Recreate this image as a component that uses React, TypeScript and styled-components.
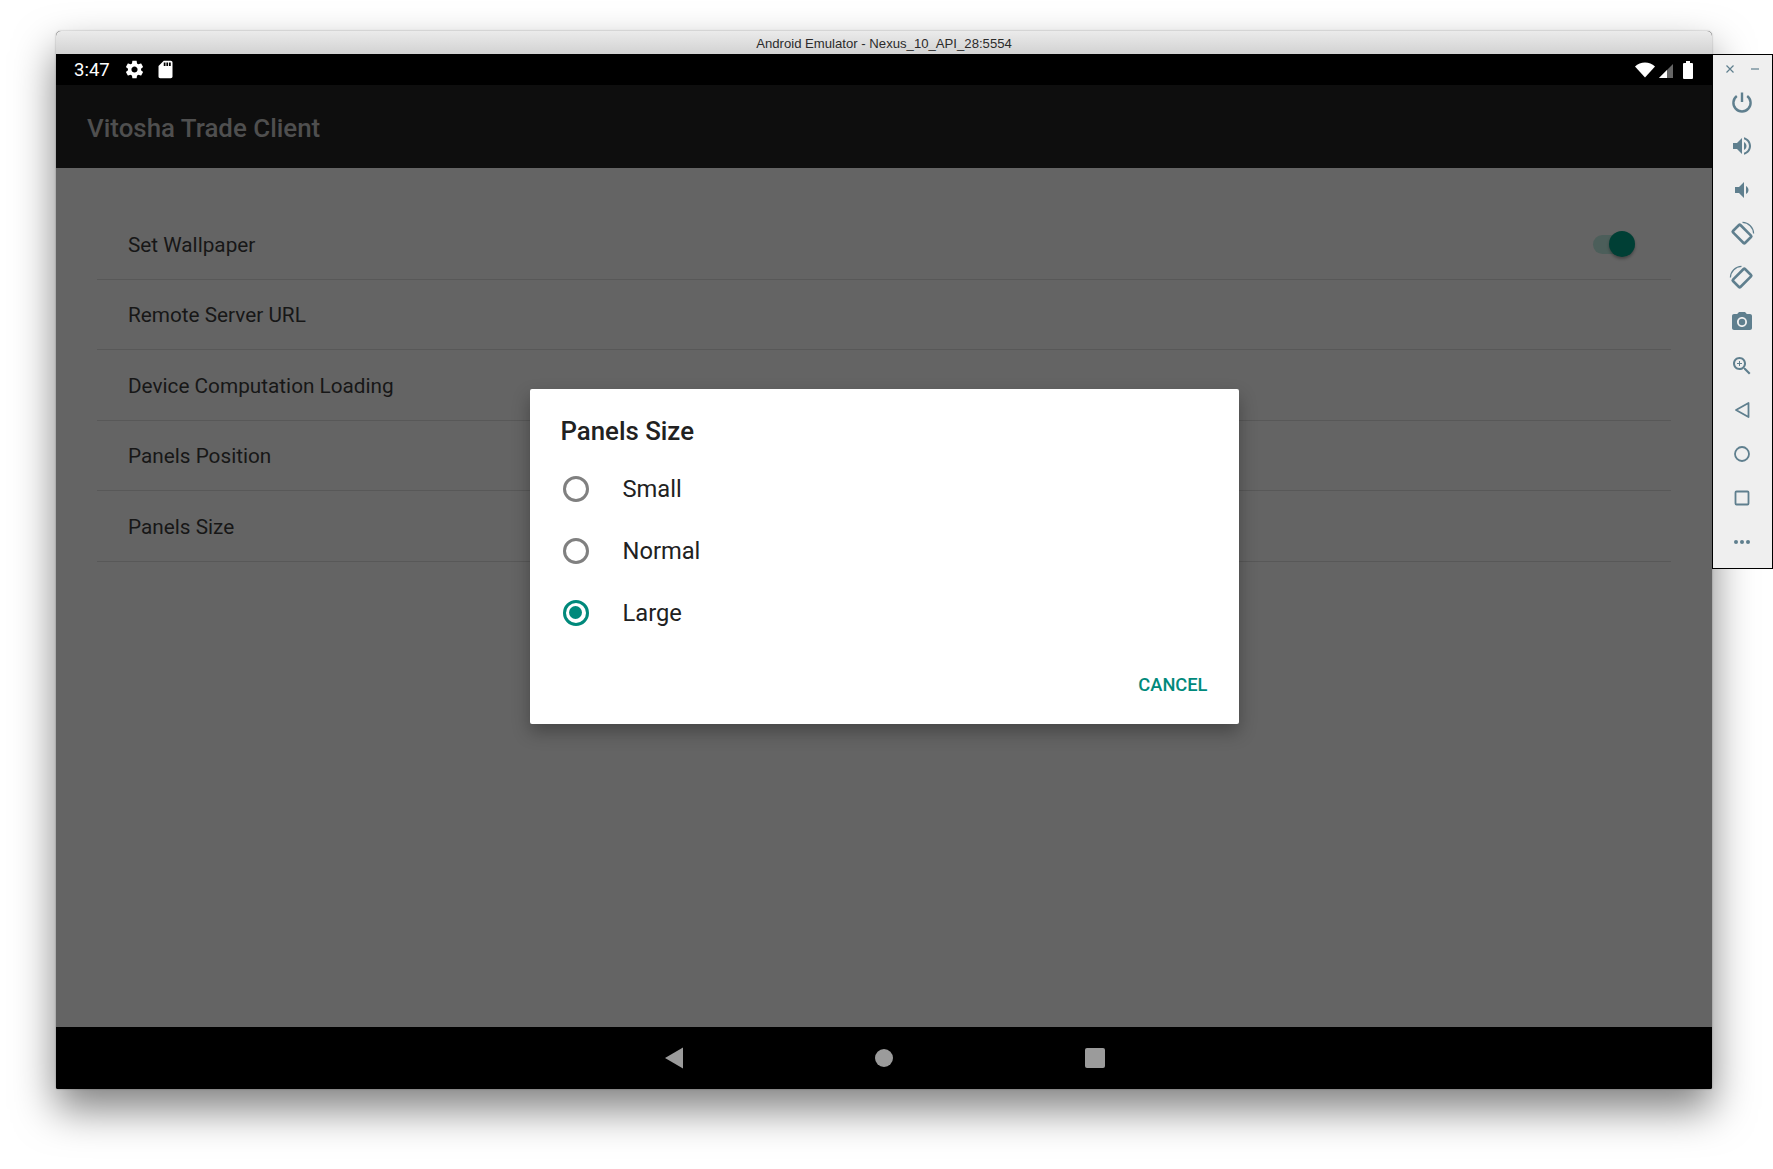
import React from "react";
import styled, { createGlobalStyle } from "styled-components";

const Global = createGlobalStyle`
  html, body { margin: 0; padding: 0; background: #fff; }
  body { width: 1773px; height: 1169px; overflow: hidden; font-family: Roboto, "Liberation Sans", sans-serif; }
`;

const Page = styled.div`
  display: flex;
  align-items: flex-start;
  padding: 31px 0 0 56px;
  width: 1773px;
  height: 1169px;
  box-sizing: border-box;
`;

const Emulator = styled.div`
  width: 1656px;
  height: 1058px;
  flex: none;
  display: flex;
  flex-direction: column;
  border-radius: 5px 5px 2px 2px;
  background: #000;
  box-shadow: 0 20px 42px rgba(0, 0, 0, 0.5), 0 0 2px rgba(0, 0, 0, 0.35);
  overflow: visible;
`;

const TitleBar = styled.div`
  height: 23px;
  flex: none;
  display: flex;
  align-items: center;
  justify-content: center;
  border-radius: 5px 5px 0 0;
  background: linear-gradient(#ebebeb, #d2d2d2);
  font-family: "Liberation Sans", Arial, sans-serif;
  font-size: 13.15px;
  color: #2b2b2b;
  padding-top: 1px;
  box-sizing: border-box;
`;

const StatusBar = styled.div`
  height: 31px;
  flex: none;
  background: #000;
  color: #fff;
  display: flex;
  align-items: center;
  padding: 0 19px 0 18px;
`;

const Clock = styled.span`
  font-size: 18.5px;
  width: 50px;
`;

const StatusRight = styled.div`
  margin-left: auto;
  display: flex;
  align-items: center;
  gap: 4px;
`;

const AppBar = styled.div`
  height: 83px;
  flex: none;
  background: #0e0e0e;
  display: flex;
  align-items: center;
  padding: 2px 0 0 31px;
  box-sizing: border-box;
  font-size: 25.9px;
  font-weight: 500;
  color: #4f4f4f;
`;

const Content = styled.div`
  flex: 1;
  position: relative;
  background: #646464;
  padding: 41px 41px 0 41px;
`;

const Row = styled.div`
  height: 70.5px;
  box-sizing: border-box;
  border-bottom: 1px solid #585858;
  display: flex;
  align-items: center;
  justify-content: space-between;
  padding: 2px 36px 0 31px;
  font-size: 20.75px;
  color: #171717;
`;

const Toggle = styled.div`
  position: relative;
  width: 42px;
  height: 19px;
  margin-top: -1px;
  border-radius: 10px;
  background: #4c5e5a;
`;

const Thumb = styled.div`
  position: absolute;
  right: 0;
  top: -4px;
  width: 26px;
  height: 26px;
  border-radius: 50%;
  background: #003f35;
  box-shadow: 0 2px 3px rgba(0, 0, 0, 0.3);
`;

const Dialog = styled.div`
  position: absolute;
  left: 473.5px;
  top: 220.5px;
  width: 709px;
  height: 335px;
  box-sizing: border-box;
  background: #fff;
  border-radius: 2px;
  box-shadow: 0 8px 18px rgba(0, 0, 0, 0.3);
  padding: 28px 31px 0 31px;
  display: flex;
  flex-direction: column;
`;

const DialogTitle = styled.div`
  font-size: 25.8px;
  font-weight: 500;
  color: #212121;
  line-height: 29px;
  margin-bottom: 12px;
`;

const Option = styled.div`
  height: 62px;
  display: flex;
  align-items: center;
  gap: 34px;
  font-size: 23.7px;
  color: #212121;
  padding-left: 2px;
  line-height: 26px;
`;

const OptionLabel = styled.span`
  padding-top: 1.5px;
`;

const Radio = styled.div<{ $on?: boolean }>`
  width: 26px;
  height: 26px;
  flex: none;
  box-sizing: border-box;
  border-radius: 50%;
  border: 3px solid ${(p) => (p.$on ? "#00897b" : "#808080")};
  display: flex;
  align-items: center;
  justify-content: center;
  &::after {
    content: "";
    display: ${(p) => (p.$on ? "block" : "none")};
    width: 13px;
    height: 13px;
    border-radius: 50%;
    background: #00897b;
  }
`;

const DialogActions = styled.div`
  margin-top: auto;
  height: 66px;
  display: flex;
  justify-content: flex-end;
  align-items: flex-start;
  padding-top: 16px;
  box-sizing: border-box;
`;

const CancelButton = styled.span`
  font-size: 18.3px;
  font-weight: 500;
  color: #00897b;
  line-height: 22px;
`;

const NavBar = styled.div`
  height: 62px;
  flex: none;
  background: #000;
  border-radius: 0 0 2px 2px;
  display: flex;
  align-items: center;
  padding-left: 512.5px;
  color: #9b9b9b;
`;

const NavSlot = styled.div`
  width: 210.5px;
  display: flex;
  justify-content: center;
`;

const NavCircle = styled.div`
  width: 18px;
  height: 18px;
  border-radius: 50%;
  background: #9b9b9b;
`;

const NavSquare = styled.div`
  width: 20px;
  height: 20px;
  border-radius: 2px;
  background: #9b9b9b;
`;

const Sidebar = styled.div`
  width: 61px;
  height: 515px;
  margin-top: 23px;
  flex: none;
  box-sizing: border-box;
  border: 1px solid #000;
  background: #efefef;
  position: relative;
  z-index: 2;
  color: #5f7f8e;
  display: flex;
  flex-direction: column;
  align-items: center;
`;

const WindowControls = styled.div`
  height: 23px;
  margin-top: 2px;
  width: 100%;
  display: flex;
  justify-content: space-between;
  align-items: center;
  padding: 0 12px 0 12px;
  box-sizing: border-box;
`;

const ToolSlot = styled.div`
  height: 44px;
  width: 100%;
  flex: none;
  display: flex;
  align-items: center;
  justify-content: center;
  padding-right: 2px;
  box-sizing: border-box;
`;

const Glyph = styled.svg`
  display: block;
  flex: none;
`;

const StatusGap = styled.span<{ $w: number }>`
  width: ${(p) => p.$w}px;
  flex: none;
`;

const P = {
  gear: "M19.43 12.98c.04-.32.07-.64.07-.98s-.03-.66-.07-.98l2.11-1.65c.19-.15.24-.42.12-.64l-2-3.46c-.12-.22-.39-.3-.61-.22l-2.49 1c-.52-.4-1.08-.73-1.69-.98l-.38-2.65C14.46 2.18 14.25 2 14 2h-4c-.25 0-.46.18-.49.42l-.38 2.65c-.61.25-1.17.59-1.69.98l-2.49-1c-.23-.09-.49 0-.61.22l-2 3.46c-.13.22-.07.49.12.64l2.11 1.65c-.04.32-.07.65-.07.98s.03.66.07.98l-2.11 1.65c-.19.15-.24.42-.12.64l2 3.46c.12.22.39.3.61.22l2.49-1c.52.4 1.08.73 1.69.98l.38 2.65c.03.24.24.42.49.42h4c.25 0 .46-.18.49-.42l.38-2.65c.61-.25 1.17-.59 1.69-.98l2.49 1c.23.09.49 0 .61-.22l2-3.46c.12-.22.07-.49-.12-.64l-2.11-1.65zM12 15.5c-1.93 0-3.5-1.57-3.5-3.5s1.57-3.5 3.5-3.5 3.5 1.57 3.5 3.5-1.57 3.5-3.5 3.5z",
  sd: "M18 2h-8L4.02 8 4 20c0 1.1.9 2 2 2h12c1.1 0 2-.9 2-2V4c0-1.1-.9-2-2-2zm-6 6h-2V4h2v4zm3 0h-2V4h2v4zm3 0h-2V4h2v4z",
  volUp: "M3 9v6h4l5 5V4L7 9H3zm13.5 3c0-1.77-1.02-3.29-2.5-4.03v8.05c1.48-.73 2.5-2.25 2.5-4.02zM14 3.23v2.06c2.89.86 5 3.54 5 6.71s-2.11 5.85-5 6.71v2.06c4.01-.91 7-4.49 7-8.77s-2.99-7.86-7-8.77z",
  volDown: "M18.5 12c0-1.77-1.02-3.29-2.5-4.03v8.05c1.48-.72 2.5-2.24 2.5-4.02zM5 9v6h4l5 5V4L9 9H5z",
  camera: "M9 2L7.17 4H4c-1.1 0-2 .9-2 2v12c0 1.1.9 2 2 2h16c1.1 0 2-.9 2-2V6c0-1.1-.9-2-2-2h-3.17L15 2H9zm3 15c-2.76 0-5-2.24-5-5s2.24-5 5-5 5 2.24 5 5-2.24 5-5 5z",
  zoom: "M15.5 14h-.79l-.28-.27C15.41 12.59 16 11.11 16 9.5 16 5.91 13.09 3 9.5 3S3 5.91 3 9.5 5.91 16 9.5 16c1.61 0 3.09-.59 4.23-1.57l.27.28v.79l5 4.99L20.49 19l-4.99-5zm-6 0C7.01 14 5 11.99 5 9.5S7.01 5 9.5 5 14 7.01 14 9.5 11.99 14 9.5 14z",
  plus: "M12 10h-2v2H9v-2H7V9h2V7h1v2h2v1z",
};

const Solid = ({ d, size = 24 }: { d: string; size?: number }) => (
  <Glyph width={size} height={size} viewBox="0 0 24 24" fill="currentColor">
    <path d={d} />
  </Glyph>
);

const Power = () => (
  <Glyph width={24} height={24} viewBox="0 0 24 24" fill="none" stroke="currentColor" strokeWidth="2.4">
    <path d="M12 2.5v9.5" />
    <path d="M6.8 6a8.6 8.6 0 1 0 10.4 0" />
  </Glyph>
);

const Rotate = ({ left }: { left?: boolean }) => (
  <Glyph width={26} height={26} viewBox="0 0 26 26" fill="none" stroke="currentColor">
    <g transform={left ? "matrix(-1 0 0 1 26 0)" : undefined}>
      <rect x="7.75" y="4.5" width="10.5" height="17" rx="1" strokeWidth="2.6" transform="rotate(-45 13 13)" />
      <path d="M13.5 1.4a11.5 11.5 0 0 1 11.1 11.1" strokeWidth="1.2" />
    </g>
  </Glyph>
);

const Outline = ({ children }: { children: React.ReactNode }) => (
  <Glyph width={24} height={24} viewBox="0 0 24 24" fill="none" stroke="currentColor" strokeWidth="1.8">
    {children}
  </Glyph>
);

const settings = ["Set Wallpaper", "Remote Server URL", "Device Computation Loading", "Panels Position", "Panels Size"];
const sizes = ["Small", "Normal", "Large"];

export default function App() {
  return (
    <Page>
      <Global />
      <Emulator>
        <TitleBar>Android Emulator - Nexus_10_API_28:5554</TitleBar>
        <StatusBar>
          <Clock>3:47</Clock>
          <Solid d={P.gear} size={21} />
          <StatusGap $w={10} />
          <Solid d={P.sd} size={21} />
          <StatusRight>
            <Glyph width={20} height={16} viewBox="0 0 20 16">
              <path d="M0 4.5C2.8 2 6.2.5 10 .5s7.2 1.5 10 4L10 15.5z" fill="#fff" />
            </Glyph>
            <Glyph width={14} height={16} viewBox="0 0 14 16">
              <path d="M14 2v14H0z" fill="#666" />
              <path d="M8 8v8H0z" fill="#fff" />
            </Glyph>
            <StatusGap $w={2} />
            <Glyph width={10} height={18} viewBox="0 0 10 18">
              <path d="M3 0h4v2h2a1 1 0 0 1 1 1v14a1 1 0 0 1-1 1H1a1 1 0 0 1-1-1V3a1 1 0 0 1 1-1h2z" fill="#fff" />
            </Glyph>
          </StatusRight>
        </StatusBar>
        <AppBar>Vitosha Trade Client</AppBar>
        <Content>
          {settings.map((s, i) => (
            <Row key={s}>
              {s}
              {i === 0 && (
                <Toggle>
                  <Thumb />
                </Toggle>
              )}
            </Row>
          ))}
          <Dialog>
            <DialogTitle>Panels Size</DialogTitle>
            {sizes.map((s) => (
              <Option key={s}>
                <Radio $on={s === "Large"} />
                <OptionLabel>{s}</OptionLabel>
              </Option>
            ))}
            <DialogActions>
              <CancelButton>CANCEL</CancelButton>
            </DialogActions>
          </Dialog>
        </Content>
        <NavBar>
          <NavSlot>
            <Glyph width={18} height={22} viewBox="0 0 18 22">
              <path d="M18 0.5v21L0 11z" fill="currentColor" />
            </Glyph>
          </NavSlot>
          <NavSlot>
            <NavCircle />
          </NavSlot>
          <NavSlot>
            <NavSquare />
          </NavSlot>
        </NavBar>
      </Emulator>
      <Sidebar>
        <WindowControls>
          <Glyph width={10} height={10} viewBox="0 0 10 10" stroke="currentColor" strokeWidth="1.2">
            <path d="M1.5 1.5l7 7M8.5 1.5l-7 7" />
          </Glyph>
          <Glyph width={10} height={10} viewBox="0 0 10 10" stroke="currentColor" strokeWidth="1.2">
            <path d="M1 5h8" />
          </Glyph>
        </WindowControls>
        <ToolSlot><Power /></ToolSlot>
        <ToolSlot><Solid d={P.volUp} /></ToolSlot>
        <ToolSlot><Solid d={P.volDown} /></ToolSlot>
        <ToolSlot><Rotate /></ToolSlot>
        <ToolSlot><Rotate left /></ToolSlot>
        <ToolSlot>
          <Glyph width={24} height={24} viewBox="0 0 24 24" fill="currentColor">
            <path d={P.camera} />
            <circle cx="12" cy="12" r="3.2" />
          </Glyph>
        </ToolSlot>
        <ToolSlot>
          <Glyph width={24} height={24} viewBox="0 0 24 24" fill="currentColor">
            <path d={P.zoom} />
            <path d={P.plus} />
          </Glyph>
        </ToolSlot>
        <ToolSlot><Outline><path d="M18.5 5v14L6 12z" strokeLinejoin="round" /></Outline></ToolSlot>
        <ToolSlot><Outline><circle cx="12" cy="12" r="7" /></Outline></ToolSlot>
        <ToolSlot><Outline><rect x="5.5" y="5.5" width="13" height="13" rx="1" /></Outline></ToolSlot>
        <ToolSlot>
          <Glyph width={24} height={24} viewBox="0 0 24 24" fill="currentColor">
            <circle cx="6" cy="12" r="2" />
            <circle cx="12" cy="12" r="2" />
            <circle cx="18" cy="12" r="2" />
          </Glyph>
        </ToolSlot>
      </Sidebar>
    </Page>
  );
}
